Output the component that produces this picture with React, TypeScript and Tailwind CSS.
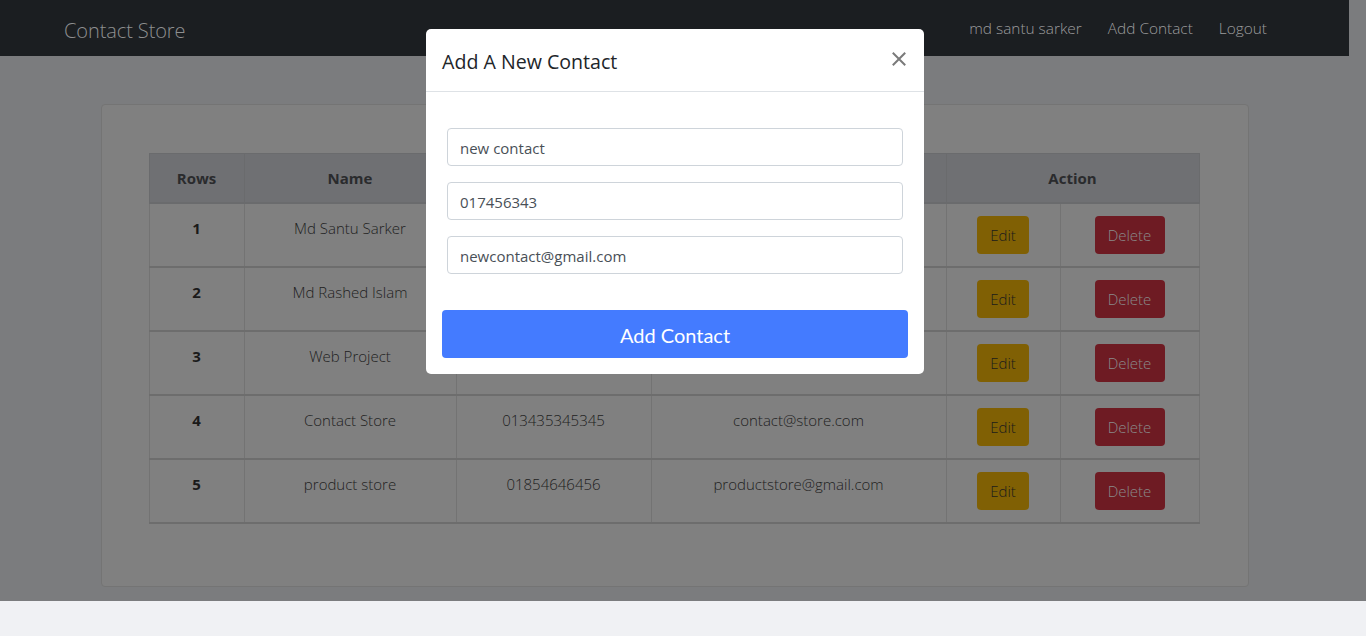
import React from "react";

const rows = [
  { n: 1, name: "Md Santu Sarker", phone: "", email: "" },
  { n: 2, name: "Md Rashed Islam", phone: "", email: "" },
  { n: 3, name: "Web Project", phone: "", email: "" },
  { n: 4, name: "Contact Store", phone: "013435345345", email: "contact@store.com" },
  { n: 5, name: "product store", phone: "01854646456", email: "productstore@gmail.com" },
];

const td =
  "align-top pt-3 pb-3 text-center border-x border-x-[#737373] border-b-2 border-b-[#6d6d6d]";

export default function App() {
  return (
    <div
      className="w-[1366px] h-[636px] overflow-hidden bg-[#f0f1f4] relative"
      style={{ fontFamily: '"Open Sans", "Noto Sans", sans-serif' }}
    >
      <div className="flex h-[601px] bg-[#7b7c7e]">
        <div className="w-[1349px] flex flex-col">
          <nav className="h-[56px] bg-[#1b1e21] flex items-center justify-between pl-16 pr-[82px]">
            <span className="text-[20px] text-[#8e8f90] font-light tracking-[-0.1px] pt-[5px]">Contact Store</span>
            <div className="flex items-center gap-[26px] text-[15.4px] font-light text-[#9b9c9d] pt-[1px]">
              <span>md santu sarker</span>
              <span>Add Contact</span>
              <span>Logout</span>
            </div>
          </nav>
          <div className="mx-auto mt-12 w-[1148px] h-[483px] bg-[#808080] border border-[#747474] rounded-[4px] pl-[47px] pr-12 pt-12">
            <table className="w-[1051px] border-collapse text-[15px] text-[#1e1e1e] font-light">
              <thead>
                <tr className="bg-[#6f7073]">
                  <th className="w-[95px] py-3 leading-6 font-bold text-[#2a2b2d] border border-[#6a6b6d] border-b-2">Rows</th>
                  <th className="w-[212px] py-3 leading-6 font-bold text-[#2a2b2d] border border-[#6a6b6d] border-b-2">Name</th>
                  <th className="w-[195px] py-3 leading-6 font-bold text-[#2a2b2d] border border-[#6a6b6d] border-b-2">Phone</th>
                  <th className="w-[295px] py-3 leading-6 font-bold text-[#2a2b2d] border border-[#6a6b6d] border-b-2">Email</th>
                  <th colSpan={2} className="py-3 leading-6 font-bold text-[#2a2b2d] border border-[#6a6b6d] border-b-2">Action</th>
                </tr>
              </thead>
              <tbody>
                {rows.map((r) => (
                  <tr key={r.n}>
                    <td className={td + " font-bold leading-6 text-[#1a1a1a]"}>{r.n}</td>
                    <td className={td + " leading-6"}>{r.name}</td>
                    <td className={td + " leading-6"}>{r.phone}</td>
                    <td className={td + " leading-6"}>{r.email}</td>
                    <td className={td + " w-[114px]"}>
                      <span className="inline-flex items-center justify-center w-[52px] h-[38px] rounded-[4px] bg-[#806004] text-[#1b1b1b] text-[15px] font-light">Edit</span>
                    </td>
                    <td className={td + " w-[139px]"}>
                      <span className="inline-flex items-center justify-center w-[70px] h-[38px] rounded-[4px] bg-[#6e1b23] text-[#8a8a8a] text-[15px] font-light">Delete</span>
                    </td>
                  </tr>
                ))}
              </tbody>
            </table>
          </div>
        </div>
        <div className="w-[17px] bg-[#7b7c7e]" />
      </div>

      <div className="absolute left-[426px] top-[29px] w-[498px] bg-white rounded-[5px] flex flex-col">
        <div className="h-[63px] border-b border-[#dee2e6] flex items-center justify-between pl-4 pr-[18px]">
          <h5 className="text-[19.6px] font-medium text-[#212529] pt-[4px]">Add A New Contact</h5>
          <svg width="14" height="14" viewBox="0 0 14 14" className="mt-[-2px]">
            <path d="M1.5 1.5 L12.5 12.5 M12.5 1.5 L1.5 12.5" stroke="#7a7a7a" strokeWidth="2" strokeLinecap="square" />
          </svg>
        </div>
        <div className="px-4 pt-9 pb-4 flex flex-col">
          <div className="px-[5px] flex flex-col gap-4">
            {["new contact", "017456343", "newcontact@gmail.com"].map((v) => (
              <div
                key={v}
                className="h-[38px] border border-[#ced4da] rounded-[4px] flex items-center px-[12px] pt-[2px] text-[15px] text-[#495057]"
              >
                {v}
              </div>
            ))}
          </div>
          <button
            className="mt-9 h-[48px] w-full rounded-[4px] bg-[#447bff] text-white text-[20px] pt-[2px]"
            style={{ fontFamily: 'Lato, "Open Sans", sans-serif' }}
          >
            Add Contact
          </button>
        </div>
      </div>
    </div>
  );
}
